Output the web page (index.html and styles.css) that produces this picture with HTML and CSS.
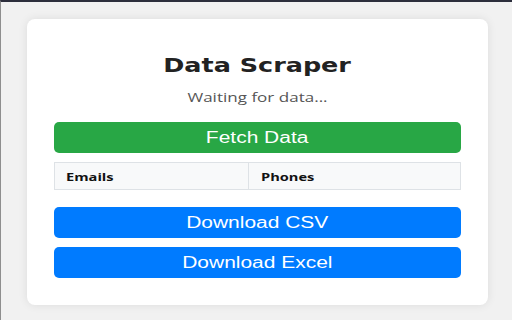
FILE: index.html
```html
<!DOCTYPE html>
<html lang="en">
<head>
<meta charset="utf-8">
<title>Data Scraper</title>
<link rel="stylesheet" href="styles.css">
</head>
<body>
<div class="frame">
  <main class="card">
    <h1 class="title"><span class="wide">Data Scraper</span></h1>
    <p class="status"><span class="wide">Waiting for data...</span></p>
    <button class="btn btn-green"><span class="wide">Fetch Data</span></button>
    <div class="table">
      <div class="th"><span class="wide-left">Emails</span></div>
      <div class="th"><span class="wide-left">Phones</span></div>
    </div>
    <button class="btn btn-blue btn-first"><span class="wide">Download CSV</span></button>
    <button class="btn btn-blue"><span class="wide">Download Excel</span></button>
  </main>
</div>
</body>
</html>
```
FILE: styles.css
```css
* { box-sizing: border-box; }
html, body { margin: 0; padding: 0; }
body {
  width: 512px;
  height: 320px;
  overflow: hidden;
  background: #f1f1f1;
  font-family: "Open Sans", "DejaVu Sans", sans-serif;
}
.frame {
  height: 320px;
  border-top: 2px solid #2c2e3c;
  border-left: 1px solid #8e8e8e;
  padding: 17px 0 0 26px;
}
.card {
  width: 461px;
  height: 286px;
  background: #ffffff;
  border-radius: 8px;
  box-shadow: 0 0 10px rgba(0, 0, 0, 0.09);
  padding: 35px 27px 27px;
  display: flex;
  flex-direction: column;
  align-items: stretch;
}
.wide {
  display: inline-block;
  transform: scaleX(1.31);
}
.wide-left {
  display: inline-block;
  transform: scaleX(1.33);
  transform-origin: left center;
}
.title {
  margin: 0;
  font-family: "DejaVu Sans", sans-serif;
  font-weight: bold;
  font-size: 19px;
  line-height: 22px;
  color: #222222;
  text-align: center;
}
.title .wide {
  transform: scaleX(1.34);
}
.status {
  margin: 12px 0 0;
  font-family: "Open Sans", sans-serif;
  font-size: 13px;
  line-height: 18px;
  color: #555555;
  text-align: center;
}
.btn {
  display: flex;
  align-items: center;
  justify-content: center;
  height: 31px;
  border: 0;
  border-radius: 5px;
  color: #ffffff;
  font-family: "Liberation Sans", Arial, sans-serif;
  font-size: 16px;
  padding: 0;
  margin: 9px 0 0;
}
.btn-green {
  background: #28a745;
  margin-top: 16px;
}
.btn-blue {
  background: #007bff;
}
.btn-first {
  margin-top: 17px;
}
.table {
  margin-top: 9px;
  height: 28px;
  display: grid;
  grid-template-columns: 193px 1fr;
  border: 1px solid #dee2e6;
  background: #f8f9fa;
}
.th {
  display: flex;
  align-items: center;
  padding-left: 11px;
  font-family: "Open Sans", sans-serif;
  font-weight: bold;
  font-size: 11px;
  color: #111111;
}
.th + .th {
  border-left: 1px solid #dee2e6;
  padding-left: 12px;
}
```
